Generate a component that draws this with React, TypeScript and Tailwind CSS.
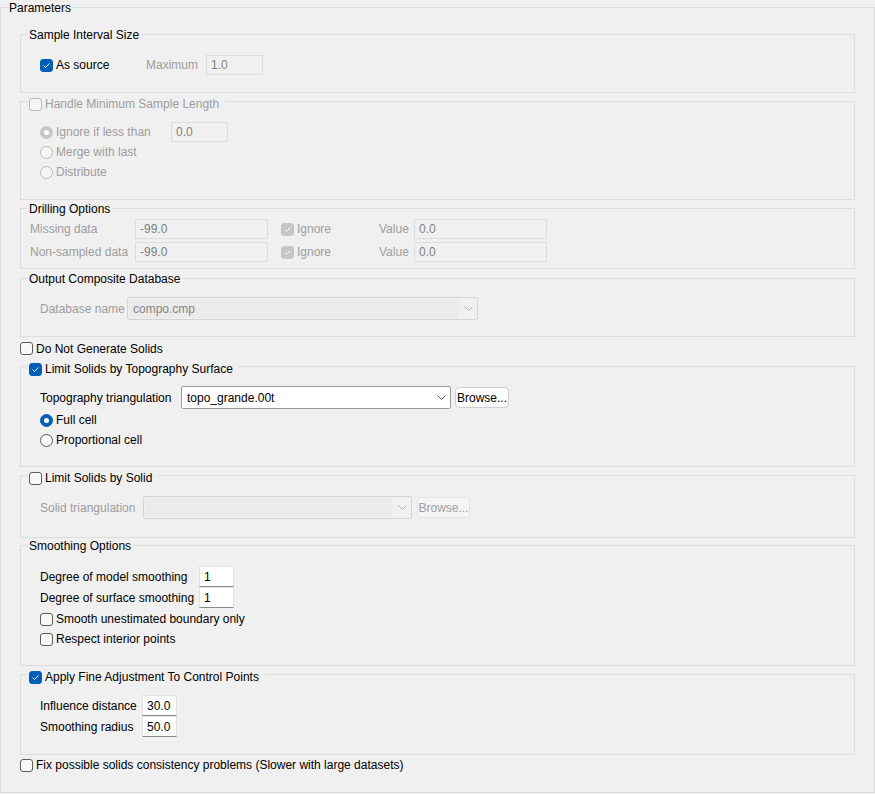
import React from 'react';

const GRAY = 'text-[#9d9d9d]';

function Check({ checked = false, disabled = false }: { checked?: boolean; disabled?: boolean }) {
  const box = checked
    ? disabled
      ? 'bg-[#c6c6c6] border-[#c6c6c6]'
      : 'bg-[#005fb8] border-[#005fb8]'
    : disabled
      ? 'bg-[#f5f5f5] border-[#b8b8b8]'
      : 'bg-[#f8f8f8] border-[#5c5c5c]';
  return (
    <span className={`flex h-[13px] w-[13px] shrink-0 items-center justify-center rounded-[3px] border ${box}`}>
      {checked && (
        <svg viewBox="0 0 11 11" className="h-[11px] w-[11px]">
          <path d="M2.6 5.6 L4.5 7.5 L8.4 3.4" fill="none" stroke="white" strokeWidth="1" />
        </svg>
      )}
    </span>
  );
}

function Radio({ checked = false, disabled = false }: { checked?: boolean; disabled?: boolean }) {
  const ring = checked
    ? disabled
      ? 'bg-[#c6c6c6] border-[#c6c6c6]'
      : 'bg-[#005fb8] border-[#005fb8]'
    : disabled
      ? 'bg-[#f5f5f5] border-[#b8b8b8]'
      : 'bg-[#f8f8f8] border-[#5c5c5c]';
  return (
    <span className={`flex h-[13px] w-[13px] shrink-0 items-center justify-center rounded-full border ${ring}`}>
      {checked && <span className="h-[5px] w-[5px] rounded-full bg-white" />}
    </span>
  );
}

function Field({ value, className, disabled = false }: { value: string; className: string; disabled?: boolean }) {
  const look = disabled
    ? 'bg-[#f0f0f0] border-[#dcdcdc] text-[#808080]'
    : 'bg-white border-[#e2e2e2] border-b-[#8a8a8a] text-black';
  return <div className={`flex items-center border px-[4px] ${look} ${className}`}>{value}</div>;
}

function Chevron({ disabled = false }: { disabled?: boolean }) {
  return (
    <svg viewBox="0 0 9 5" className="h-[5px] w-[9px]">
      <path d="M0.5 0.5 L4.5 4.5 L8.5 0.5" fill="none" stroke={disabled ? '#b4b4b4' : '#5a5a5a'} strokeWidth="1" />
    </svg>
  );
}

function Combo({ value, className, disabled = false }: { value: string; className: string; disabled?: boolean }) {
  if (disabled) {
    return (
      <div className={`flex h-[23px] items-stretch rounded-[2px] border border-[#d4d4d4] bg-[#f0f0f0] ${className}`}>
        <div className="m-[1px] flex flex-1 items-center bg-[#ebebeb] px-[4px] text-[#858585]">{value}</div>
        <div className="flex w-[18px] items-center justify-center">
          <Chevron disabled />
        </div>
      </div>
    );
  }
  return (
    <div className={`flex h-[23px] items-center rounded-[2px] border border-[#9c9c9c] bg-white ${className}`}>
      <div className="flex-1 px-[5px]">{value}</div>
      <div className="flex w-[18px] items-center justify-center">
        <Chevron />
      </div>
    </div>
  );
}

function Button({ label, className, disabled = false }: { label: string; className: string; disabled?: boolean }) {
  const look = disabled
    ? 'bg-[#f5f5f5] border-[#e3e3e3] text-[#a0a0a0]'
    : 'bg-[#fdfdfd] border-[#cfcfcf] text-black';
  return (
    <div className={`flex h-[21px] items-center justify-center rounded-[4px] border ${look} ${className}`}>{label}</div>
  );
}

function Group({
  title,
  className,
  children,
}: {
  title: React.ReactNode;
  className: string;
  children: React.ReactNode;
}) {
  return (
    <fieldset className={`min-w-0 border border-[#dcdcdc] ${className}`}>
      <legend className="ml-[7px] leading-[15px]">{title}</legend>
      {children}
    </fieldset>
  );
}

// checkbox titles sit a little below the frame line, as in the Windows group box
function CheckTitle({ label, checked = false, disabled = false }: { label: string; checked?: boolean; disabled?: boolean }) {
  return (
    <span className="mt-[3px] -mb-[3px] flex items-center gap-[3px] pl-[1px] pr-[6px]">
      <Check checked={checked} disabled={disabled} />
      <span className={disabled ? GRAY : ''}>{label}</span>
    </span>
  );
}

function TextTitle({ label }: { label: string }) {
  return <span className="mt-[1px] -mb-[1px] block px-[1px] pr-[2px]">{label}</span>;
}

export default function App() {
  return (
    <div className="h-[794px] w-[875px] bg-[#f0f0f0] font-['Liberation_Sans',Arial,sans-serif] text-[12px] text-black">
      <fieldset className="h-[793px] w-[875px] min-w-0 border border-[#dcdcdc]">
        <legend className="ml-[7px] leading-[15px]">
          <TextTitle label="Parameters" />
        </legend>

        <div className="flex flex-col px-[19px] pt-[12px]">
          {/* Sample Interval Size */}
          <Group title={<TextTitle label="Sample Interval Size" />} className="h-[66px]">
            <div className="mt-[13px] flex h-[20px] items-center pl-[19px]">
              <div className="flex w-[106px] items-center gap-[3px]">
                <Check checked />
                <span>As source</span>
              </div>
              <span className={`w-[60px] ${GRAY}`}>Maximum</span>
              <Field value="1.0" className="h-[20px] w-[57px]" disabled />
            </div>
          </Group>

          {/* Handle Minimum Sample Length */}
          <Group title={<CheckTitle label="Handle Minimum Sample Length" disabled />} className="mt-[1px] h-[106px]">
            <div className={`mt-[13px] flex flex-col pl-[19px] ${GRAY}`}>
              <div className="flex h-[20px] items-center">
                <div className="flex w-[131px] items-center gap-[3px]">
                  <Radio checked disabled />
                  <span>Ignore if less than</span>
                </div>
                <Field value="0.0" className="h-[20px] w-[57px]" disabled />
              </div>
              <div className="flex h-[20px] items-center gap-[3px]">
                <Radio disabled />
                <span>Merge with last</span>
              </div>
              <div className="flex h-[20px] items-center gap-[3px]">
                <Radio disabled />
                <span>Distribute</span>
              </div>
            </div>
          </Group>

          {/* Drilling Options */}
          <Group title={<TextTitle label="Drilling Options" />} className="mt-[1px] h-[68px]">
            <div className="mt-[3px] flex flex-col gap-[3px] pl-[9px]">
              {['Missing data', 'Non-sampled data'].map((label) => (
                <div key={label} className="flex h-[20px] items-center">
                  <span className={`w-[105px] ${GRAY}`}>{label}</span>
                  <Field value="-99.0" className="h-[20px] w-[133px]" disabled />
                  <div className="ml-[13px] flex w-[98px] items-center gap-[3px]">
                    <Check checked disabled />
                    <span className={GRAY}>Ignore</span>
                  </div>
                  <span className={`w-[35px] ${GRAY}`}>Value</span>
                  <Field value="0.0" className="h-[20px] w-[133px]" disabled />
                </div>
              ))}
            </div>
          </Group>

          {/* Output Composite Database */}
          <Group title={<TextTitle label="Output Composite Database" />} className="mt-[2px] h-[66px]">
            <div className="mt-[11px] flex h-[23px] items-center pl-[19px]">
              <span className={`w-[87px] ${GRAY}`}>Database name</span>
              <Combo value="compo.cmp" className="w-[351px]" disabled />
            </div>
          </Group>

          <div className="flex h-[22px] items-center gap-[3px] pt-[1px]">
            <Check />
            <span>Do Not Generate Solids</span>
          </div>

          {/* Limit Solids by Topography Surface */}
          <Group title={<CheckTitle label="Limit Solids by Topography Surface" checked />} className="h-[108px]">
            <div className="mt-[12px] flex flex-col pl-[19px]">
              <div className="flex h-[23px] items-center">
                <span className="w-[141px]">Topography triangulation</span>
                <Combo value="topo_grande.00t" className="w-[270px]" />
                <Button label="Browse..." className="ml-[4px] w-[54px]" />
              </div>
              <div className="mt-[1px] flex h-[20px] items-center gap-[3px]">
                <Radio checked />
                <span>Full cell</span>
              </div>
              <div className="flex h-[20px] items-center gap-[3px]">
                <Radio />
                <span>Proportional cell</span>
              </div>
            </div>
          </Group>

          {/* Limit Solids by Solid */}
          <Group title={<CheckTitle label="Limit Solids by Solid" />} className="mt-[1px] h-[70px]">
            <div className="mt-[13px] flex h-[23px] items-center pl-[19px]">
              <span className={`w-[103px] ${GRAY}`}>Solid triangulation</span>
              <Combo value="" className="w-[269px]" disabled />
              <Button label="Browse..." className="ml-[5px] w-[53px]" disabled />
            </div>
          </Group>

          {/* Smoothing Options */}
          <Group title={<TextTitle label="Smoothing Options" />} className="h-[128px]">
            <div className="mt-[13px] flex flex-col pl-[19px]">
              <div className="flex h-[21px] items-center">
                <span className="w-[159px]">Degree of model smoothing</span>
                <Field value="1" className="h-[21px] w-[35px]" />
              </div>
              <div className="flex h-[21px] items-center">
                <span className="w-[159px]">Degree of surface smoothing</span>
                <Field value="1" className="h-[21px] w-[35px]" />
              </div>
              <div className="mt-[1px] flex h-[20px] items-center gap-[3px]">
                <Check />
                <span>Smooth unestimated boundary only</span>
              </div>
              <div className="flex h-[20px] items-center gap-[3px]">
                <Check />
                <span>Respect interior points</span>
              </div>
            </div>
          </Group>

          {/* Apply Fine Adjustment To Control Points */}
          <Group title={<CheckTitle label="Apply Fine Adjustment To Control Points" checked />} className="mt-[1px] h-[88px]">
            <div className="mt-[13px] flex flex-col pl-[19px]">
              <div className="flex h-[21px] items-center">
                <span className="w-[102px]">Influence distance</span>
                <Field value="30.0" className="h-[21px] w-[35px]" />
              </div>
              <div className="flex h-[21px] items-center">
                <span className="w-[102px]">Smoothing radius</span>
                <Field value="50.0" className="h-[21px] w-[35px]" />
              </div>
            </div>
          </Group>

          <div className="flex h-[20px] items-center gap-[3px]">
            <Check />
            <span>Fix possible solids consistency problems (Slower with large datasets)</span>
          </div>
        </div>
      </fieldset>
    </div>
  );
}
